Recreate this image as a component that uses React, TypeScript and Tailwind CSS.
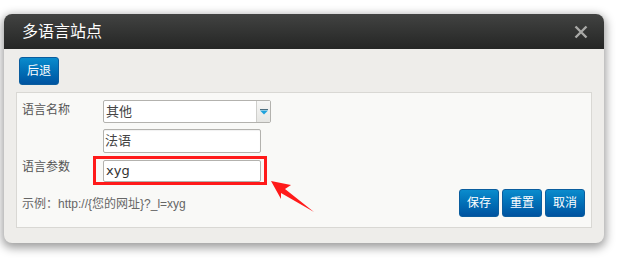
import React from "react";

const cjk = "font-['Liberation_Sans','Noto_Sans_CJK_SC',sans-serif]";

function BlueButton({ children, className = "" }: { children: React.ReactNode; className?: string }) {
  return (
    <button
      className={`h-[28px] w-[40px] rounded-[3px] border border-[#0a5d9e] bg-gradient-to-b from-[#0b8ccd] to-[#0053a0] text-[12px] leading-[26px] text-white ${cjk} ${className}`}
    >
      {children}
    </button>
  );
}

export default function App() {
  return (
    <div className="relative h-[260px] w-[624px] overflow-hidden bg-white">
      <div className="pl-[4px] pt-[14px]">
        <div className="w-[600px] rounded-[8px] bg-[#eeedea] shadow-[0_3px_10px_2px_rgba(0,0,0,0.38)]">
          {/* header */}
          <div className="flex h-[35px] items-center justify-between rounded-t-[8px] bg-gradient-to-b from-[#424342] to-[#252625] pl-[18px] pr-[16px]">
            <span className={`text-[16px] leading-[20px] text-white ${cjk}`}>多语言站点</span>
            <svg width="14" height="14" viewBox="0 0 14 14" className="mt-[1px]">
              <path d="M1.5 1.5 L12.5 12.5 M12.5 1.5 L1.5 12.5" stroke="#a9a9a7" strokeWidth="2.4" strokeLinecap="butt" />
            </svg>
          </div>
          {/* body */}
          <div className="px-[12px] pb-[15px] pt-[8px]">
            <div className="pl-[3px]">
              <BlueButton className="w-[39px]">后退</BlueButton>
            </div>
            <div className="mt-[7px] border border-[#d9d8d4] bg-[#f9f9f7] pb-[10px] pl-[5px] pr-[6px] pt-[7px]">
              {/* row 1 */}
              <div className="flex">
                <div className={`w-[81px] pt-[1px] text-[12px] leading-[18px] text-[#555] ${cjk}`}>语言名称</div>
                <div className="flex h-[23px] w-[168px] rounded-[2px] border border-[#b3b2ae] bg-white">
                  <div className={`flex-1 pl-[2px] text-[13px] leading-[21px] text-[#444] ${cjk}`}>其他</div>
                  <div className="flex w-[14px] items-center justify-center border-l border-[#cfcfcc] bg-gradient-to-b from-[#f7f7f6] to-[#e6e6e3]">
                    <svg width="8" height="6" viewBox="0 0 8 6">
                      <rect x="0" y="0" width="8" height="1" fill="#4c6e80" />
                      <path d="M0 1.5 L8 1.5 L4 5.5 Z" fill="#1ea2dc" />
                    </svg>
                  </div>
                </div>
              </div>
              {/* row 2 */}
              <div className="mt-[6px] flex">
                <div className="w-[81px]" />
                <div className={`h-[24px] w-[158px] rounded-[2px] border border-[#b3b2ae] bg-white pl-[1px] text-[13px] leading-[22px] text-[#444] shadow-[inset_0_1px_1px_rgba(0,0,0,0.06)] ${cjk}`}>
                  法语
                </div>
              </div>
              {/* row 3 */}
              <div className="mt-[7px] flex">
                <div className={`w-[81px] text-[12px] leading-[15px] text-[#555] ${cjk}`}>语言参数</div>
                <div className="h-[22px] w-[158px] rounded-[2px] border border-[#b3b2ae] bg-white pl-[2px] font-['DejaVu_Sans',sans-serif] text-[13px] leading-[20px] text-[#333]">
                  xyg
                </div>
              </div>
              {/* row 4 */}
              <div className="mt-[7px] flex items-center justify-between">
                <div className={`pt-[1px] text-[12px] leading-[16px] text-[#666] ${cjk}`}>示例：http://{"{"}您的网址{"}"}?_l=xyg</div>
                <div className="flex gap-[3px]">
                  <BlueButton>保存</BlueButton>
                  <BlueButton>重置</BlueButton>
                  <BlueButton>取消</BlueButton>
                </div>
              </div>
            </div>
          </div>
        </div>
      </div>
      {/* red highlight box */}
      <div className="pointer-events-none absolute left-[93px] top-[156px] h-[29px] w-[174px] border-[3px] border-[#ff1a1a]" />
      {/* red arrow */}
      <svg className="pointer-events-none absolute left-0 top-0" width="624" height="260">
        <polygon points="271,181 291,185 285,189 314,212 281,193 281,199" fill="#ff1a1a" />
      </svg>
    </div>
  );
}
